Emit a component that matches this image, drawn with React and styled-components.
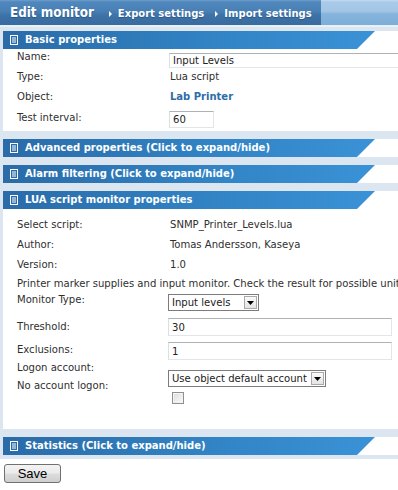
import React from "react";
import styled, { createGlobalStyle } from "styled-components";

const BODY_FONT = `"DejaVu Sans Condensed", "DejaVu Sans", Verdana, sans-serif`;
const BOLD_FONT = `"DejaVu Sans", Verdana, sans-serif`;

const GlobalStyle = createGlobalStyle`
  html, body { margin: 0; padding: 0; overflow: hidden; background: #fff; }
  body { font-family: ${BODY_FONT}; font-size: 11.2px; color: #2f2f2f; }
`;

const Page = styled.div`
  width: 440px;
`;

const TopBar = styled.header`
  display: flex;
  height: 25px;
`;

const TitleArea = styled.div`
  flex: 0 0 321px;
  box-sizing: border-box;
  display: flex;
  align-items: baseline;
  padding: 3px 0 0 10px;
  color: #fff;
  background: linear-gradient(#6d9dcb 0, #5088bd 2px, #4880b6 45%, #3e73a8 60%, #386b9f 100%);
  text-shadow: 0 1px 1px rgba(20, 50, 90, 0.45);
`;

const Title = styled.h1`
  margin: 0;
  font: bold 13.3px/20px ${BODY_FONT};
`;

const NavLink = styled.a`
  display: inline-flex;
  align-items: center;
  gap: 6px;
  margin-left: ${(p) => p.$gap}px;
  font: bold 10px/20px ${BOLD_FONT};
  color: #fff;
  text-decoration: none;
`;

const TopFill = styled.div`
  flex: 1;
  background: linear-gradient(#c0dbf1 0, #a9cbe8 2px, #a3c6e6 45%, #86b4dc 56%, #7daed9 100%);
`;

const Main = styled.main`
  display: flex;
  flex-direction: column;
  gap: 8px;
  padding: 4px 0 4px 3px;
  background: #dce6f0;
  border-top: 2px solid #e9f0f6;
`;

const Section = styled.section`
  background: #fff;
`;

const SectionHead = styled.div`
  width: 372px;
  height: 18px;
  box-sizing: border-box;
  padding-left: 7px;
  display: flex;
  align-items: center;
  gap: 7px;
  background: linear-gradient(90deg, #2a6ba8 0%, #3183c4 55%, #3a92d6 100%);
  clip-path: polygon(0 0, 100% 0, calc(100% - 18px) 100%, 0 100%);
  color: #fff;
  font: bold 10px/18px ${BOLD_FONT};
  cursor: pointer;
  white-space: nowrap;
`;

const SectionBody = styled.div`
  box-sizing: border-box;
  height: ${(p) => p.$h}px;
  padding: ${(p) => p.$pt}px 0 0 14px;
`;

const Row = styled.div`
  display: flex;
  align-items: flex-start;
  height: ${(p) => p.$h}px;
`;

const Label = styled.div`
  flex: 0 0 151px;
  margin-top: ${(p) => p.$mt || 0}px;
  line-height: 14px;
  white-space: nowrap;
`;

const Value = styled.div`
  padding-left: 2px;
  margin-top: ${(p) => p.$mt || 0}px;
  line-height: 14px;
  white-space: nowrap;
`;

const LinkValue = styled(Value)`
  font: bold 10px/14px ${BOLD_FONT};
  color: #2e6ca6;
`;

const Note = styled.div`
  line-height: 14px;
  white-space: nowrap;
`;

const TextInput = styled.input`
  box-sizing: border-box;
  width: ${(p) => p.$w}px;
  height: ${(p) => p.$h}px;
  margin: ${(p) => p.$mt || 0}px 0 0 ${(p) => p.$ml || 0}px;
  padding: 0 3px;
  border: 1px solid #e1e6eb;
  border-top-color: #aeb1b6;
  border-left-color: #dadfe4;
  font: 11.2px ${BODY_FONT};
  color: #222;
  background: #fff;
  outline: none;
`;

const SelectWrap = styled.div`
  box-sizing: border-box;
  display: flex;
  align-items: center;
  width: ${(p) => p.$w}px;
  height: 17px;
  margin-top: ${(p) => p.$mt || 0}px;
  border: 1px solid #7c7c7c;
  background: #fff;
`;

const NativeSelect = styled.select`
  flex: 1;
  min-width: 0;
  height: 100%;
  appearance: none;
  border: none;
  background: transparent;
  padding: 0 0 0 3px;
  font: 11.2px ${BODY_FONT};
  color: #222;
  outline: none;
`;

const ArrowBox = styled.span`
  flex: 0 0 auto;
  box-sizing: border-box;
  width: 13px;
  height: 13px;
  margin-right: 1px;
  display: flex;
  align-items: center;
  justify-content: center;
  border: 1px solid #a9a9a9;
  background: linear-gradient(#fafafa, #e4e4e4);
  pointer-events: none;
`;

const Check = styled.span`
  display: inline-block;
  box-sizing: border-box;
  width: 12px;
  height: 12px;
  margin: ${(p) => p.$mt || 0}px 0 0 4px;
  border: 1px solid #8e8f8f;
  background: linear-gradient(135deg, #dcdcdc, #fafafa);
  box-shadow: inset 1px 1px 0 #f4f4f4;
`;

const Footer = styled.div`
  padding: 5px 0 0 4px;
`;

const SaveButton = styled.button`
  box-sizing: border-box;
  width: 57px;
  height: 19px;
  padding: 0;
  border: 1px solid #707070;
  border-radius: 3px;
  background: linear-gradient(#f3f3f3 0%, #ebebeb 48%, #dddddd 52%, #cfcfcf 100%);
  font: 13px/17px "Liberation Sans", Arial, sans-serif;
  color: #000;
`;

const DocIcon = () => (
  <svg width="8" height="10" viewBox="0 0 8 10" aria-hidden="true">
    <rect x="0.5" y="0.5" width="7" height="9" fill="none" stroke="#fff" strokeWidth="1" />
    <path d="M2 3h4M2 5h4M2 7h4" stroke="#fff" strokeWidth="1" />
  </svg>
);

const SmallArrow = () => (
  <svg width="3" height="6" viewBox="0 0 3 6" aria-hidden="true">
    <path d="M0 0L3 3L0 6Z" fill="#fff" />
  </svg>
);

const DownArrow = () => (
  <svg width="7" height="4" viewBox="0 0 7 4" aria-hidden="true">
    <path d="M0 0H7L3.5 4Z" fill="#000" />
  </svg>
);

const Select = ({ w, mt, value }) => (
  <SelectWrap $w={w} $mt={mt}>
    <NativeSelect defaultValue={value}>
      <option>{value}</option>
    </NativeSelect>
    <ArrowBox>
      <DownArrow />
    </ArrowBox>
  </SelectWrap>
);

const Head = ({ children }) => (
  <SectionHead>
    <DocIcon />
    <span>{children}</span>
  </SectionHead>
);

export default function App() {
  return (
    <Page>
      <GlobalStyle />
      <TopBar>
        <TitleArea>
          <Title>Edit monitor</Title>
          <NavLink $gap={15} href="#">
            <SmallArrow />
            Export settings
          </NavLink>
          <NavLink $gap={11} href="#">
            <SmallArrow />
            Import settings
          </NavLink>
        </TitleArea>
        <TopFill />
      </TopBar>

      <Main>
        <Section>
          <Head>Basic properties</Head>
          <SectionBody $h={82} $pt={1}>
            <Row $h={20}>
              <Label>Name:</Label>
              <TextInput $w={240} $h={15} $mt={3} $ml={1} defaultValue="Input Levels" />
            </Row>
            <Row $h={20}>
              <Label>Type:</Label>
              <Value>Lua script</Value>
            </Row>
            <Row $h={20}>
              <Label>Object:</Label>
              <LinkValue>Lab Printer</LinkValue>
            </Row>
            <Row $h={21}>
              <Label $mt={1}>Test interval:</Label>
              <TextInput $w={45} $h={17} $mt={1} $ml={1} defaultValue="60" />
            </Row>
          </SectionBody>
        </Section>

        <Section>
          <Head>Advanced properties (Click to expand/hide)</Head>
        </Section>

        <Section>
          <Head>Alarm filtering (Click to expand/hide)</Head>
        </Section>

        <Section>
          <Head>LUA script monitor properties</Head>
          <SectionBody $h={220} $pt={9}>
            <Row $h={20}>
              <Label>Select script:</Label>
              <Value>SNMP_Printer_Levels.lua</Value>
            </Row>
            <Row $h={20}>
              <Label>Author:</Label>
              <Value>Tomas Andersson, Kaseya</Value>
            </Row>
            <Row $h={19}>
              <Label>Version:</Label>
              <Value>1.0</Value>
            </Row>
            <Row $h={16}>
              <Note>
                Printer marker supplies and input monitor. Check the result for possible units and values.
              </Note>
            </Row>
            <Row $h={25}>
              <Label>Monitor Type:</Label>
              <Select w={91} mt={1} value="Input levels" />
            </Row>
            <Row $h={24}>
              <Label $mt={2}>Threshold:</Label>
              <TextInput $w={224} $h={18} defaultValue="30" />
            </Row>
            <Row $h={19}>
              <Label $mt={1}>Exclusions:</Label>
              <TextInput $w={224} $h={18} defaultValue="1" />
            </Row>
            <Row $h={18}>
              <Label>Logon account:</Label>
              <Select w={158} mt={9} value="Use object default account" />
            </Row>
            <Row $h={50}>
              <Label>No account logon:</Label>
              <Check $mt={13} />
            </Row>
          </SectionBody>
        </Section>

        <Section>
          <Head>Statistics (Click to expand/hide)</Head>
        </Section>
      </Main>

      <Footer>
        <SaveButton type="button">Save</SaveButton>
      </Footer>
    </Page>
  );
}
